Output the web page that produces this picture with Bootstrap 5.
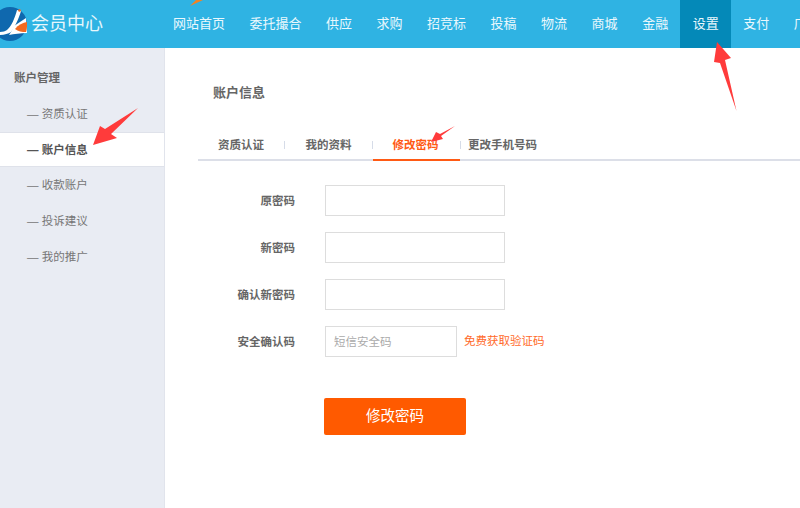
<!DOCTYPE html>
<html lang="zh-CN">
<head>
<meta charset="UTF-8">
<title>会员中心</title>
<link href="https://cdn.jsdelivr.net/npm/bootstrap@5.3.0/dist/css/bootstrap.min.css" rel="stylesheet">
<style>
    body {
        font-family: "Liberation Sans", "Noto Sans CJK SC", sans-serif;
        font-size: 12px;
        color: #666;
        height: 508px;
        width: 800px;
        overflow: hidden;
        position: relative;
    }
    .top-bar { height: 48px; background: #2fb3e3; color: #fff; overflow: hidden; }
    .logo-box { width: 165px; flex: none; }
    .logo-title { font-size: 18px; margin-left: 4px; color: #e8f7fc; }
    .top-link { color: #eaf8fd; font-size: 13px; text-decoration: none; padding: 0 12.25px; line-height: 48px; white-space: nowrap; flex: none; }
    .top-link.on { background: #0489b8; }
    .side-bar { width: 165px; flex: none; height: 460px; background: #e9ecf3; border-right: 1px solid #e1e4ec; }
    .side-title { font-weight: 700; color: #666; padding: 23px 0 0 14px; height: 48px; font-size: 11.5px; line-height: 14px; }
    .side-item { height: 36px; line-height: 36px; padding-left: 27px; color: #777; font-size: 11.5px; }
    .side-item.on { height: 35px; background: #fff; color: #555; font-weight: 700; border-top: 1px solid #dfe2ea; border-bottom: 1px solid #dfe2ea; line-height: 34px; }
    .side-item.after { line-height: 37px; }
    .main-box { padding: 36px 0 0 33px; width: 635px; }
    .main-title { font-size: 13px; font-weight: 700; color: #666; line-height: 18px; margin-left: 15px; }
    .tab-row { margin-top: 27px; height: 32px; width: 602px; border-bottom: 2px solid #dcdfe8; }
    .tab-cell { width: 87px; height: 32px; text-align: center; line-height: 32px; font-weight: 700; font-size: 11.5px; color: #666; position: relative; flex: none; }
    .tab-cell.first { width: 86px; text-align: left; padding-left: 20px; }
    .tab-cell.on { color: #ff5a14; border-bottom: 2px solid #ff5a14; padding-right: 2px; }
    .tab-cell.wide { padding-right: 4px; }
    .tab-sep { width: 1px; height: 8px; background: #d6dce8; margin-top: 12px; flex: none; }
    .form-row-x { height: 31px; margin-bottom: 16px; }
    .form-label-x { width: 97px; text-align: right; font-weight: 700; color: #666; font-size: 11.5px; flex: none; margin-right: 30px; padding-top: 2px; }
    .text-box { width: 180px; height: 31px; border: 1px solid #ddd; border-radius: 0; padding: 0 8px; font-size: 11.5px; }
    .text-box.short { width: 132px; }
    .text-box::placeholder { color: #aaa; }
    .code-link { color: #ff6a2a; font-size: 11.5px; text-decoration: none; margin-left: 7px; }
    .submit-btn { width: 142px; height: 37px; background: #ff5a00; color: #fff; font-size: 14.5px; border: 0; border-radius: 2px; margin: 25px 0 0 126px; padding: 0; }
    .form-box { margin-top: 24px; }
    .note-arrow { position: absolute; left: 0; top: 0; pointer-events: none; }
</style>
</head>
<body>
    <div class="top-bar d-flex align-items-center">
        <div class="logo-box d-flex align-items-center">
            <svg width="27" height="34" viewBox="0 0 27 34">
                <circle cx="10" cy="17" r="17" fill="#0f68ae"/>
                <path d="M14 19L26 11L27 26C20 26 14 27 9 28L11 25Z" fill="#fff"/>
                <path d="M15 22C18 18 23 15.500 27 15C27.300 18 27 22 26 25C22 25 18 24.500 15 22Z" fill="#f26a21"/>
                <path d="M17 3C15 11 11 20 7 23C5 24.500 2 25 -2 25V28C4 28 8 27 11 25C15 20 19 11 21 4Z" fill="#fff"/>
                <circle cx="19.500" cy="3.500" r="1.300" fill="#f26a21"/>
            </svg>
            <span class="logo-title">会员中心</span>
        </div>
        <a class="top-link" style="margin-left:-4.250px" href="#">网站首页</a>
        <a class="top-link" href="#">委托撮合</a>
        <a class="top-link" href="#">供应</a>
        <a class="top-link" href="#">求购</a>
        <a class="top-link" href="#">招竞标</a>
        <a class="top-link" href="#">投稿</a>
        <a class="top-link" href="#">物流</a>
        <a class="top-link" href="#">商城</a>
        <a class="top-link" href="#">金融</a>
        <a class="top-link on" href="#">设置</a>
        <a class="top-link" href="#">支付</a>
        <a class="top-link" href="#">广告</a>
    </div>
    <div class="d-flex">
        <div class="side-bar">
            <div class="side-title">账户管理</div>
            <div class="side-item">— 资质认证</div>
            <div class="side-item on">— 账户信息</div>
            <div class="side-item after">— 收款账户</div>
            <div class="side-item after">— 投诉建议</div>
            <div class="side-item after">— 我的推广</div>
        </div>
        <div class="main-box">
            <div class="main-title">账户信息</div>
            <div class="tab-row d-flex">
                <div class="tab-cell first">资质认证</div>
                <div class="tab-sep"></div>
                <div class="tab-cell">我的资料</div>
                <div class="tab-sep"></div>
                <div class="tab-cell on">修改密码</div>
                <div class="tab-sep"></div>
                <div class="tab-cell wide">更改手机号码</div>
            </div>
            <form class="form-box">
                <div class="form-row-x d-flex align-items-center"><label class="form-label-x">原密码</label><input class="text-box" type="password"></div>
                <div class="form-row-x d-flex align-items-center"><label class="form-label-x">新密码</label><input class="text-box" type="password"></div>
                <div class="form-row-x d-flex align-items-center"><label class="form-label-x">确认新密码</label><input class="text-box" type="password"></div>
                <div class="form-row-x d-flex align-items-center"><label class="form-label-x">安全确认码</label><input class="text-box short" type="text" placeholder="短信安全码"><a class="code-link" href="#">免费获取验证码</a></div>
                <button class="submit-btn btn" type="button">修改密码</button>
            </form>
        </div>
    </div>
    <svg class="note-arrow" width="800" height="508" viewBox="0 0 800 508">
        <path d="M190 6L203 0H196Z" fill="#f58220"/>
        <path d="M138 108L105 129L100 126L93 145L117 138L111 134Z" fill="#ff3b3b"/>
        <path d="M717 42L731 58L725 60L736.500 111L720 63L714 62Z" fill="#ff3b3b"/>
        <path d="M455 126L440 134L436 132L431 142L443 139L441 136Z" fill="#ff3b3b"/>
    </svg>
    <script src="https://cdn.jsdelivr.net/npm/bootstrap@5.3.0/dist/js/bootstrap.bundle.min.js"></script>
</body>
</html>
